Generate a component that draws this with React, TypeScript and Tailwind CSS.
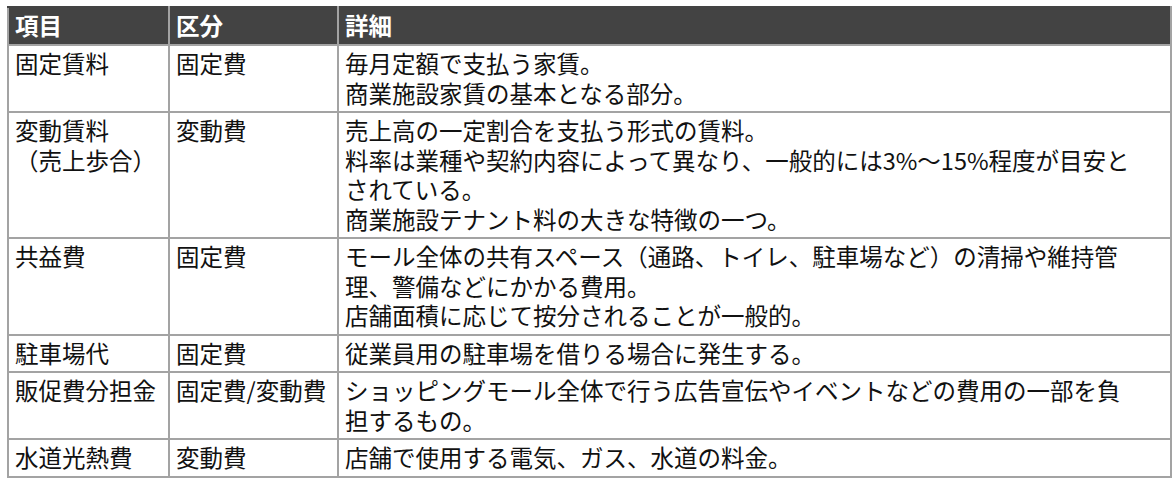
import React from "react";

const rows: { item: string[]; kind: string; detail: string[] }[] = [
  { item: ["固定賃料"], kind: "固定費", detail: ["毎月定額で支払う家賃。", "商業施設家賃の基本となる部分。"] },
  {
    item: ["変動賃料", "（売上歩合）"],
    kind: "変動費",
    detail: [
      "売上高の一定割合を支払う形式の賃料。",
      "料率は業種や契約内容によって異なり、一般的には3%～15%程度が目安と",
      "されている。",
      "商業施設テナント料の大きな特徴の一つ。",
    ],
  },
  {
    item: ["共益費"],
    kind: "固定費",
    detail: [
      "モール全体の共有スペース（通路、トイレ、駐車場など）の清掃や維持管",
      "理、警備などにかかる費用。",
      "店舗面積に応じて按分されることが一般的。",
    ],
  },
  { item: ["駐車場代"], kind: "固定費", detail: ["従業員用の駐車場を借りる場合に発生する。"] },
  {
    item: ["販促費分担金"],
    kind: "固定費/変動費",
    detail: ["ショッピングモール全体で行う広告宣伝やイベントなどの費用の一部を負", "担するもの。"],
  },
  { item: ["水道光熱費"], kind: "変動費", detail: ["店舗で使用する電気、ガス、水道の料金。"] },
];

function Lines({ lines }: { lines: string[] }) {
  return (
    <>
      {lines.map((l, i) => (
        <div key={i} className="whitespace-nowrap">
          {l}
        </div>
      ))}
    </>
  );
}

export default function App() {
  return (
    <div className="bg-white w-[1175px] h-[490px] pt-[6px] pl-[7px] font-['Noto_Sans_CJK_JP','Noto_Sans',sans-serif] text-[#111] text-[23.5px] leading-[29.5px]">
      <table className="w-[1165px] table-fixed border-collapse border-2 border-[#a3a3a3]">
        <colgroup>
          <col className="w-[161px]" />
          <col className="w-[169px]" />
          <col />
        </colgroup>
        <thead>
          <tr className="bg-[#434343] text-white font-bold h-[38px]">
            <th className="text-left align-middle px-[6px] py-0 border-2 border-[#a3a3a3] border-t-[#434343]">項目</th>
            <th className="text-left align-middle px-[6px] py-0 border-2 border-[#a3a3a3] border-t-[#434343]">区分</th>
            <th className="text-left align-middle px-[6px] py-0 border-2 border-[#a3a3a3] border-t-[#434343]">詳細</th>
          </tr>
        </thead>
        <tbody>
          {rows.map((r, i) => (
            <tr key={i}>
              <td className="align-top px-[6px] py-[3px] border-2 border-[#a3a3a3]">
                <Lines lines={r.item} />
              </td>
              <td className="align-top px-[6px] py-[3px] border-2 border-[#a3a3a3] whitespace-nowrap">{r.kind}</td>
              <td className="align-top px-[6px] py-[3px] border-2 border-[#a3a3a3]">
                <Lines lines={r.detail} />
              </td>
            </tr>
          ))}
        </tbody>
      </table>
    </div>
  );
}
